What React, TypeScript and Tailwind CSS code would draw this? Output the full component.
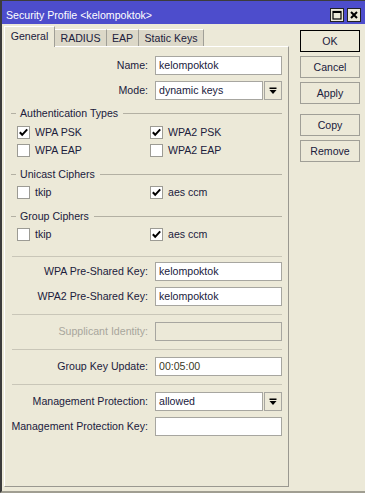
import React from "react";

const TXT = "text-[#20203c]";

function Input({ value, disabled, w = "w-[127px]", color }: { value?: string; disabled?: boolean; w?: string; color?: string }) {
  return (
    <div
      className={`${w} h-[19px] border border-[#a7a6a0] flex items-center pl-[3px] ${disabled ? "bg-[#ece9d8]" : "bg-white"} ${color ?? TXT}`}
    >
      <span className="leading-none">{value}</span>
    </div>
  );
}

function DropArrow() {
  return (
    <div className="w-[18px] h-[19px] ml-px border border-[#a7a6a0] bg-[#ece9d8] flex items-center justify-center">
      <svg width="8" height="8" viewBox="0 0 8 8">
        <rect x="0.5" y="0.5" width="7" height="1.5" fill="#000" />
        <polygon points="0.5,3 7.5,3 4,7" fill="#000" />
      </svg>
    </div>
  );
}

function Row({ label, children, mt, disabled }: { label: string; children: React.ReactNode; mt: string; disabled?: boolean }) {
  return (
    <div className={`flex items-center h-[19px] ${mt}`}>
      <div className={`w-[143px] text-right leading-none ${disabled ? "text-[#a8a69c]" : TXT}`}>{label}</div>
      <div className="ml-[7px] flex">{children}</div>
    </div>
  );
}

function Header({ label, mt }: { label: string; mt: string }) {
  return (
    <div className={`flex items-center h-[14px] ${mt} ml-[6px] mr-[6px]`}>
      <div className="w-[5px] h-px bg-[#b3b0a3]" />
      <span className={`ml-[4px] leading-none ${TXT}`}>{label}</span>
      <div className="ml-[5px] flex-1 h-px bg-[#b3b0a3]" />
    </div>
  );
}

function Check({ checked, label }: { checked?: boolean; label: string }) {
  return (
    <div className="flex items-center w-[133px]">
      <div className="w-[13px] h-[13px] border border-[#9c9b94] bg-white flex items-center justify-center">
        {checked && (
          <svg width="11" height="11" viewBox="0 0 11 11">
            <path d="M1.8 5.2 L4.2 7.8 L9.2 2.3" stroke="#000" strokeWidth="2" fill="none" />
          </svg>
        )}
      </div>
      <span className={`ml-[5px] leading-none ${TXT}`}>{label}</span>
    </div>
  );
}

function CheckRow({ a, b, mt }: { a: [string, boolean]; b: [string, boolean]; mt: string }) {
  return (
    <div className={`flex h-[13px] items-center ml-[12px] ${mt}`}>
      <Check label={a[0]} checked={a[1]} />
      <Check label={b[0]} checked={b[1]} />
    </div>
  );
}

function Sep({ mt }: { mt: string }) {
  return <div className={`h-px bg-[#c9c6b8] ml-[7px] mr-[6px] ${mt}`} />;
}

function Btn({ label, def, mt }: { label: string; def?: boolean; mt: string }) {
  return (
    <div
      className={`w-[60px] h-[22px] flex items-center justify-center border ${def ? "border-black" : "border-[#a09f97]"} bg-[#ece9d8] ${mt} ${TXT}`}
    >
      <span className="leading-none">{label}</span>
    </div>
  );
}

function Tab({ label, w, active }: { label: string; w: string; active?: boolean }) {
  if (active) {
    return (
      <div
        className={`${w} h-[21px] -mb-px relative z-10 bg-[#ece9d8] border-t border-l border-white border-r border-r-[#a09f97] flex items-center justify-center pb-[2px] ${TXT}`}
      >
        <span className="leading-none">{label}</span>
      </div>
    );
  }
  return (
    <div
      className={`${w} h-[17px] bg-[#dcd8c8] border-t border-white border-r border-r-[#a09f97] flex items-center justify-center ${TXT}`}
    >
      <span className="leading-none">{label}</span>
    </div>
  );
}

export default function App() {
  return (
    <div className="w-[365px] h-[493px] bg-[#ece9d8] border-l-2 border-t border-[#3c3c3c] border-b-2 border-b-[#a09e92] flex flex-col overflow-hidden font-['Liberation_Sans',Arial,sans-serif] text-[10.6px]">
      {/* title bar */}
      <div className="h-[23px] bg-[#4d4dcc] flex items-start shrink-0">
        <span className="ml-[4px] mt-[9px] text-white leading-none">Security Profile &lt;kelompoktok&gt;</span>
        <div className="ml-auto mt-[7px] mr-[4px] flex gap-[3px]">
          <div className="w-[14px] h-[14px] bg-[#ece9d8] border border-[#222] flex items-center justify-center">
            <svg width="10" height="10" viewBox="0 0 10 10">
              <rect x="1" y="1.5" width="8" height="7.5" stroke="#000" strokeWidth="1.2" fill="none" />
              <rect x="1" y="1" width="8" height="2" fill="#000" />
            </svg>
          </div>
          <div className="w-[14px] h-[14px] bg-[#ece9d8] border border-[#222] flex items-center justify-center">
            <svg width="10" height="10" viewBox="0 0 10 10">
              <path d="M2 2 L8 8 M8 2 L2 8" stroke="#000" strokeWidth="2" />
            </svg>
          </div>
        </div>
      </div>

      <div className="flex flex-1">
        {/* left: tabs + panel */}
        <div className="ml-[2px] w-[285px] flex flex-col">
          <div className="h-[22px] flex items-end">
            <Tab label="General" w="w-[51px]" active />
            <Tab label="RADIUS" w="w-[52px]" />
            <Tab label="EAP" w="w-[32px]" />
            <Tab label="Static Keys" w="w-[65px]" />
          </div>
          <div className="h-[441px] border-t border-l border-white border-r border-b border-r-[#9a9890] border-b-[#9a9890] flex flex-col">
            <Row label="Name:" mt="mt-[9px]">
              <Input value="kelompoktok" />
            </Row>
            <Row label="Mode:" mt="mt-[6px]">
              <Input value="dynamic keys" w="w-[108px]" />
              <DropArrow />
            </Row>

            <Header label="Authentication Types" mt="mt-[6px]" />
            <CheckRow a={["WPA PSK", true]} b={["WPA2 PSK", true]} mt="mt-[6px]" />
            <CheckRow a={["WPA EAP", false]} b={["WPA2 EAP", false]} mt="mt-[5px]" />

            <Header label="Unicast Ciphers" mt="mt-[10px]" />
            <CheckRow a={["tkip", false]} b={["aes ccm", true]} mt="mt-[5px]" />

            <Header label="Group Ciphers" mt="mt-[10px]" />
            <CheckRow a={["tkip", false]} b={["aes ccm", true]} mt="mt-[5px]" />

            <Sep mt="mt-[15px]" />
            <Row label="WPA Pre-Shared Key:" mt="mt-[5px]">
              <Input value="kelompoktok" />
            </Row>
            <Row label="WPA2 Pre-Shared Key:" mt="mt-[6px]">
              <Input value="kelompoktok" />
            </Row>

            <Sep mt="mt-[8px]" />
            <Row label="Supplicant Identity:" mt="mt-[7px]" disabled>
              <Input disabled />
            </Row>

            <Sep mt="mt-[8px]" />
            <Row label="Group Key Update:" mt="mt-[7px]">
              <Input value="00:05:00" color="text-[#3c3a26]" />
            </Row>

            <Sep mt="mt-[8px]" />
            <Row label="Management Protection:" mt="mt-[7px]">
              <Input value="allowed" w="w-[108px]" />
              <DropArrow />
            </Row>
            <Row label="Management Protection Key:" mt="mt-[6px]">
              <Input />
            </Row>
          </div>
        </div>

        {/* right buttons */}
        <div className="ml-[11px] mt-[6px] flex flex-col">
          <Btn label="OK" def mt="mt-0" />
          <Btn label="Cancel" mt="mt-[4px]" />
          <Btn label="Apply" mt="mt-[4px]" />
          <Btn label="Copy" mt="mt-[10px]" />
          <Btn label="Remove" mt="mt-[4px]" />
        </div>
      </div>
    </div>
  );
}
